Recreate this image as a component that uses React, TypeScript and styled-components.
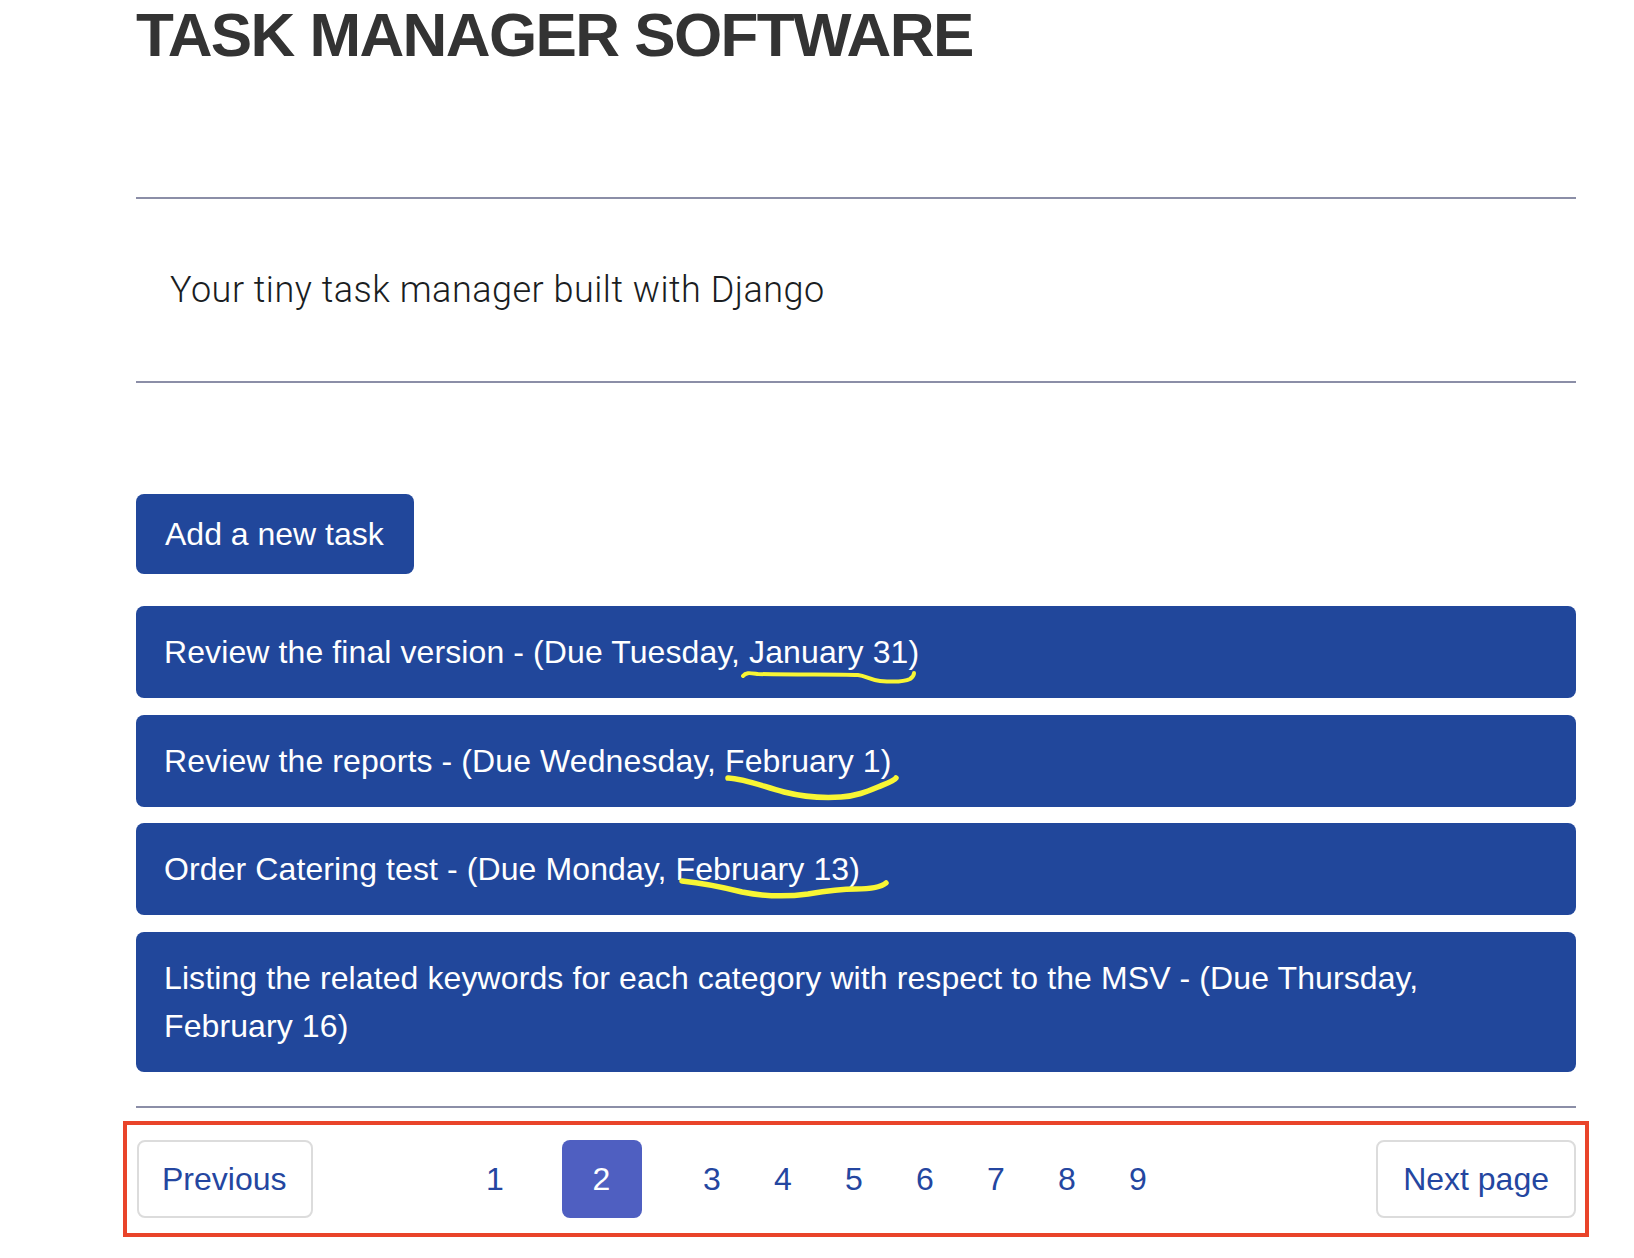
import React from "react";
import styled, { createGlobalStyle } from "styled-components";

const GlobalStyle = createGlobalStyle`
  html, body {
    margin: 0;
    padding: 0;
    background: #ffffff;
  }
  body {
    font-family: "Liberation Sans", Arial, sans-serif;
    color: #212529;
  }
  * { box-sizing: border-box; }
`;

const Page = styled.div`
  width: 1576px;
  padding-left: 136px;
`;

const Title = styled.h1`
  margin: 0;
  padding-top: 4px;
  font-family: "Liberation Sans", Arial, sans-serif;
  font-weight: 700;
  font-size: 62px;
  line-height: 62px;
  letter-spacing: -1.6px;
  color: #333333;
`;

const Rule = styled.hr<{ $top: number }>`
  margin: ${(p) => p.$top}px 0 0 0;
  border: none;
  height: 2px;
  background: #8b8ea7;
`;

const Subtitle = styled.p`
  margin: 0;
  padding: 64px 34px;
  font-family: Roboto, "Liberation Sans", sans-serif;
  font-weight: 300;
  font-size: 36px;
  line-height: 54px;
  letter-spacing: 0.5px;
  color: #1a1d22;
`;

const AddButton = styled.button`
  display: inline-block;
  margin-top: 111px;
  padding: 16px 30px 16px 29px;
  border: none;
  border-radius: 8px;
  background: #21479b;
  color: #ffffff;
  font-family: "Liberation Sans", Arial, sans-serif;
  font-size: 32px;
  line-height: 48px;
  cursor: pointer;
`;

const TaskList = styled.div`
  margin-top: 32px;
  display: flex;
  flex-direction: column;
  gap: 16.5px;
`;

const TaskRow = styled.div`
  position: relative;
  padding: 22px 30px 22px 28px;
  border-radius: 8px;
  background: #21479b;
  color: #ffffff;
  font-size: 32px;
  line-height: 48px;
  letter-spacing: 0.1px;
`;

const Highlight = styled.svg`
  position: absolute;
  left: 0;
  top: 0;
  width: 100%;
  height: 100%;
  pointer-events: none;
  overflow: visible;
`;

const Pager = styled.nav`
  margin: 13px -13px 0 -13px;
  border: 4px solid #e9442a;
  padding: 15px 9px 15px 10px;
  display: flex;
  align-items: center;
`;

const PagerButton = styled.a<{ $push?: boolean }>`
  display: inline-block;
  padding: 13px ${(p) => (p.$push ? "25px" : "24px")} 13px
    ${(p) => (p.$push ? "25px" : "23px")};
  border: 2px solid #dcdcdc;
  border-radius: 8px;
  background: #ffffff;
  color: #2446a0;
  font-size: 32px;
  line-height: 48px;
  text-decoration: none;
  margin-left: ${(p) => (p.$push ? "auto" : "0")};
`;

const PageList = styled.div`
  margin-left: 147px;
  display: flex;
  align-items: center;
`;

const PageNumber = styled.a<{ $active?: boolean }>`
  display: inline-block;
  width: ${(p) => (p.$active ? "80px" : "71px")};
  margin: ${(p) => (p.$active ? "0 35px 0 31px" : "0")};
  padding: 15px 0;
  border-radius: 8px;
  text-align: center;
  background: ${(p) => (p.$active ? "#4f5fc1" : "transparent")};
  color: ${(p) => (p.$active ? "#ffffff" : "#2446a0")};
  font-size: 32px;
  line-height: 48px;
  text-decoration: none;
`;

type Task = { text: string; mark?: string; width?: number };

const tasks: Task[] = [
  {
    text: "Review the final version - (Due Tuesday, January 31)",
    mark: "M607 70 C610 66 614 67 622 68 C660 69 700 68 722 69 C730 70 734 74 744 75 C756 76 768 76 774 73 C777 71 778 68 778 67",
    width: 4,
  },
  {
    text: "Review the reports - (Due Wednesday, February 1)",
    mark: "M592 63 C610 64 628 72 648 77 C668 82 690 83 705 82 C720 81 730 77 742 72 C752 68 758 66 760 63",
    width: 5.5,
  },
  {
    text: "Order Catering test - (Due Monday, February 13)",
    mark: "M546 58 C566 60 586 64 606 69 C626 73 650 74 672 71 C690 68 702 66 720 66 C734 66 744 65 750 60",
    width: 5.5,
  },
  {
    text: "Listing the related keywords for each category with respect to the MSV - (Due Thursday, February 16)",
  },
];

export default function App() {
  return (
    <>
      <GlobalStyle />
      <Page>
        <Title>TASK MANAGER SOFTWARE</Title>
        <Rule $top={131} />
        <Subtitle>Your tiny task manager built with Django</Subtitle>
        <Rule $top={0} />
        <AddButton>Add a new task</AddButton>
        <TaskList>
          {tasks.map((t) => (
            <TaskRow key={t.text}>
              {t.text}
              {t.mark && (
                <Highlight>
                  <path
                    d={t.mark}
                    fill="none"
                    stroke="#f8f634"
                    strokeWidth={t.width}
                    strokeLinecap="round"
                    strokeLinejoin="round"
                  />
                </Highlight>
              )}
            </TaskRow>
          ))}
        </TaskList>
        <Rule $top={34} />
        <Pager>
          <PagerButton href="#">Previous</PagerButton>
          <PageList>
            {[1, 2, 3, 4, 5, 6, 7, 8, 9].map((n) => (
              <PageNumber key={n} href="#" $active={n === 2}>
                {n}
              </PageNumber>
            ))}
          </PageList>
          <PagerButton href="#" $push>
            Next page
          </PagerButton>
        </Pager>
      </Page>
    </>
  );
}
